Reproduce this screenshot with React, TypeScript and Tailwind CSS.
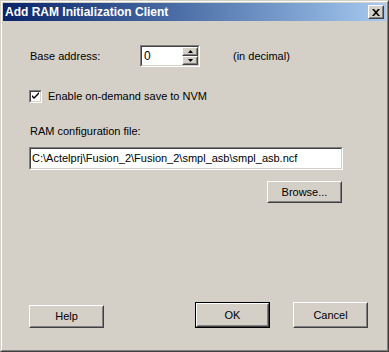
import React from "react";

const font = { fontFamily: '"Liberation Sans", Arial, sans-serif' };

function Raised({ className = "", children }: { className?: string; children?: React.ReactNode }) {
  return (
    <div className={"border border-t-white border-l-white border-r-[#404040] border-b-[#404040] bg-[#d4d0c8] " + className}>
      <div className="w-full h-full border border-t-[#d4d0c8] border-l-[#d4d0c8] border-r-[#808080] border-b-[#808080] flex items-center justify-center">
        {children}
      </div>
    </div>
  );
}

function Sunken({ className = "", children }: { className?: string; children?: React.ReactNode }) {
  return (
    <div className={"border border-t-[#808080] border-l-[#808080] border-r-white border-b-white " + className}>
      <div className="w-full h-full border border-t-[#404040] border-l-[#404040] border-r-[#d4d0c8] border-b-[#d4d0c8] bg-white flex items-center">
        {children}
      </div>
    </div>
  );
}

function Arrow({ up }: { up?: boolean }) {
  return (
    <svg width="5" height="3" viewBox="0 0 5 3">
      {up ? <polygon points="2.5,0 5,3 0,3" fill="#000" /> : <polygon points="0,0 5,0 2.5,3" fill="#000" />}
    </svg>
  );
}

export default function App() {
  return (
    <div className="w-[389px] h-[352px] border border-t-[#d4d0c8] border-l-[#d4d0c8] border-r-[#404040] border-b-[#404040] text-[11px] text-black" style={font}>
      <div className="w-full h-full border border-t-white border-l-white border-r-[#808080] border-b-[#808080] bg-[#d4d0c8] p-px flex flex-col">
        {/* title bar */}
        <div className="h-[18px] flex items-center justify-between bg-linear-to-r from-[#0a246a] to-[#a6caf0] pl-[2px] pr-[2px]">
          <span className="text-white font-bold text-[12px] leading-none">Add RAM Initialization Client</span>
          <Raised className="w-[16px] h-[14px]">
            <svg width="8" height="7" viewBox="0 0 8 7">
              <path d="M0 0h2l2 2.2L6 0h2L5 3.5 8 7H6L4 4.8 2 7H0l3-3.5z" fill="#000" />
            </svg>
          </Raised>
        </div>

        <div className="flex flex-col pl-[26px] flex-1">
          <div className="mt-[24px] h-[22px] flex items-center">
            <span className="w-[111px] pl-px">Base address:</span>
            <Sunken className="w-[60px] h-[22px]">
              <span className="pl-[2px] flex-1 text-[12px]">0</span>
              <div className="flex flex-col h-full">
                <Raised className="w-[16px] h-[9px]"><Arrow up /></Raised>
                <Raised className="w-[16px] h-[9px]"><Arrow /></Raised>
              </div>
            </Sunken>
            <span className="ml-[33px]">(in decimal)</span>
          </div>

          <div className="mt-[23px] h-[13px] flex items-center">
            <Sunken className="w-[13px] h-[13px]">
              <svg width="9" height="9" viewBox="0 0 9 9" className="shrink-0">
                <path d="M1 3v2l2 2 5-5V0L3 5z" fill="#000" />
              </svg>
            </Sunken>
            <span className="ml-[6px]">Enable on-demand save to NVM</span>
          </div>

          <div className="mt-[22px] h-[13px] leading-[13px] pl-px">RAM configuration file:</div>

          <Sunken className="mt-[9px] w-[314px] h-[23px]">
            <span className="pl-px">C:\Actelprj\Fusion_2\Fusion_2\smpl_asb\smpl_asb.ncf</span>
          </Sunken>

          <Raised className="mt-[11px] ml-[238px] w-[75px] h-[22px]">Browse...</Raised>

          <div className="mt-[99px] h-[26px] flex items-end">
            <Raised className="w-[75px] h-[23px]">Help</Raised>
            <div className="ml-[91px] border border-black">
              <Raised className="w-[73px] h-[24px]">OK</Raised>
            </div>
            <Raised className="ml-[23px] w-[75px] h-[26px]">Cancel</Raised>
          </div>
        </div>
      </div>
    </div>
  );
}
